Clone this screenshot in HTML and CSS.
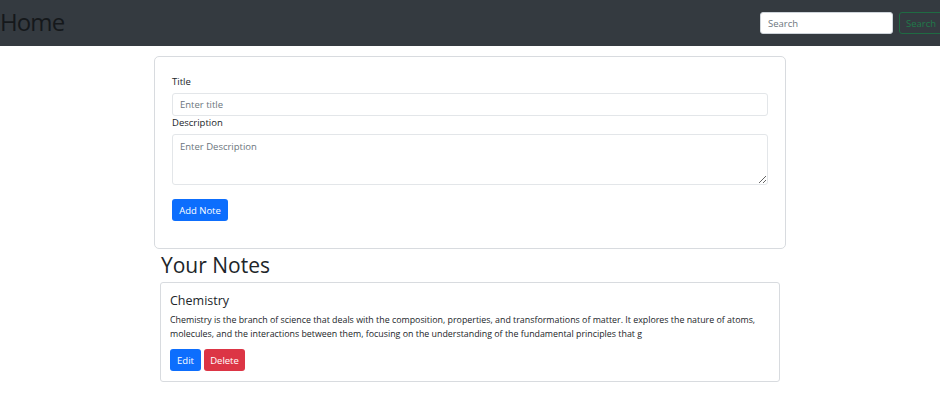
FILE: index.html
```html
<!DOCTYPE html>
<html lang="en">
<head>
<meta charset="utf-8">
<title>Home</title>
<link rel="stylesheet" href="styles.css">
</head>
<body>
<nav class="navbar">
  <span class="brand">Home</span>
  <form class="search">
    <input class="search-input" type="search" placeholder="Search">
    <button class="search-btn" type="button">Search</button>
  </form>
</nav>
<main class="container">
  <section class="form-card">
    <label class="label">Title</label>
    <input class="field" type="text" placeholder="Enter title">
    <label class="label">Description</label>
    <textarea class="field area" placeholder="Enter Description"></textarea>
    <button class="btn btn-primary add-btn" type="button">Add Note</button>
  </section>
  <section class="notes">
    <h2 class="notes-title">Your Notes</h2>
    <article class="note">
      <h5 class="note-title">Chemistry</h5>
      <p class="note-text">Chemistry is the branch of science that deals with the composition, properties, and transformations of matter. It explores the nature of atoms, molecules, and the interactions between them, focusing on the understanding of the fundamental principles that g</p>
      <div class="note-actions">
        <button class="btn btn-primary" type="button">Edit</button>
        <button class="btn btn-danger" type="button">Delete</button>
      </div>
    </article>
  </section>
</main>
</body>
</html>
```
FILE: styles.css
```css
* { box-sizing: border-box; }
body {
  margin: 0;
  background: #fff;
  font-family: "Open Sans", "Noto Sans", sans-serif;
  color: #212529;
  font-size: 10px;
}
.navbar {
  height: 46px;
  background: #343a40;
  display: flex;
  align-items: center;
  justify-content: space-between;
  overflow: hidden;
}
.brand {
  font-size: 24px;
  letter-spacing: -0.9px;
  color: #15181b;
  line-height: 1;
  margin-top: -2px;
}
.search {
  display: flex;
  align-items: center;
  gap: 6px;
  margin-right: -8px;
}
.search-input {
  width: 133px;
  height: 22px;
  border: 1px solid #ced4da;
  border-radius: 3px;
  padding: 0 7px;
  font: inherit;
  font-size: 9.5px;
  color: #212529;
  background: #fff;
}
.search-input::placeholder { color: #6c757d; }
.search-btn {
  height: 22px;
  width: 49px;
  border: 1px solid #1f6b43;
  border-radius: 3px;
  background: transparent;
  color: #1f7a4a;
  font: inherit;
  font-size: 9.5px;
  padding: 0 0 0 6px;
  text-align: left;
}
.container {
  width: 632px;
  margin: 10px auto 0;
}
.form-card {
  border: 1px solid #d8dbdf;
  border-radius: 5px;
  padding: 18px 17px 27px;
  display: flex;
  flex-direction: column;
  align-items: flex-start;
}
.label {
  font-size: 9.5px;
  line-height: 14px;
  margin-bottom: 4px;
}
.field {
  width: 100%;
  height: 23px;
  border: 1px solid #e3e6e9;
  border-radius: 3px;
  padding: 0 7px;
  font: inherit;
  font-size: 9.5px;
  color: #212529;
  margin: 0;
}
.field::placeholder { color: #6c757d; }
.area {
  height: 51px;
  padding-top: 5px;
  resize: vertical;
  margin-bottom: 14px;
}
.btn {
  height: 22px;
  border: none;
  border-radius: 3px;
  color: #fff;
  font: inherit;
  font-size: 9.5px;
  padding: 0 8px;
}
.btn-primary { background: #0d6efd; }
.btn-danger { background: #dc3545; }
.add-btn { width: 56px; padding: 0; }
.notes {
  padding: 0 6px;
}
.notes-title {
  margin: 4px 0 5px 1px;
  font-weight: 400;
  font-size: 21px;
  line-height: 24px;
}
.note {
  border: 1px solid #d8dbdf;
  border-radius: 3px;
  padding: 10px 9px 10px;
}
.note-title {
  margin: 0 0 4px;
  font-weight: 400;
  font-size: 12.5px;
  line-height: 16px;
}
.note-text {
  margin: 0 0 8px;
  font-size: 8.85px;
  line-height: 14px;
}
.note-actions {
  display: flex;
  gap: 3px;
}
.note-actions .btn { height: 22px; }
.note-actions .btn-primary { width: 31px; padding: 0; }
.note-actions .btn-danger { width: 41px; padding: 0; }
```
